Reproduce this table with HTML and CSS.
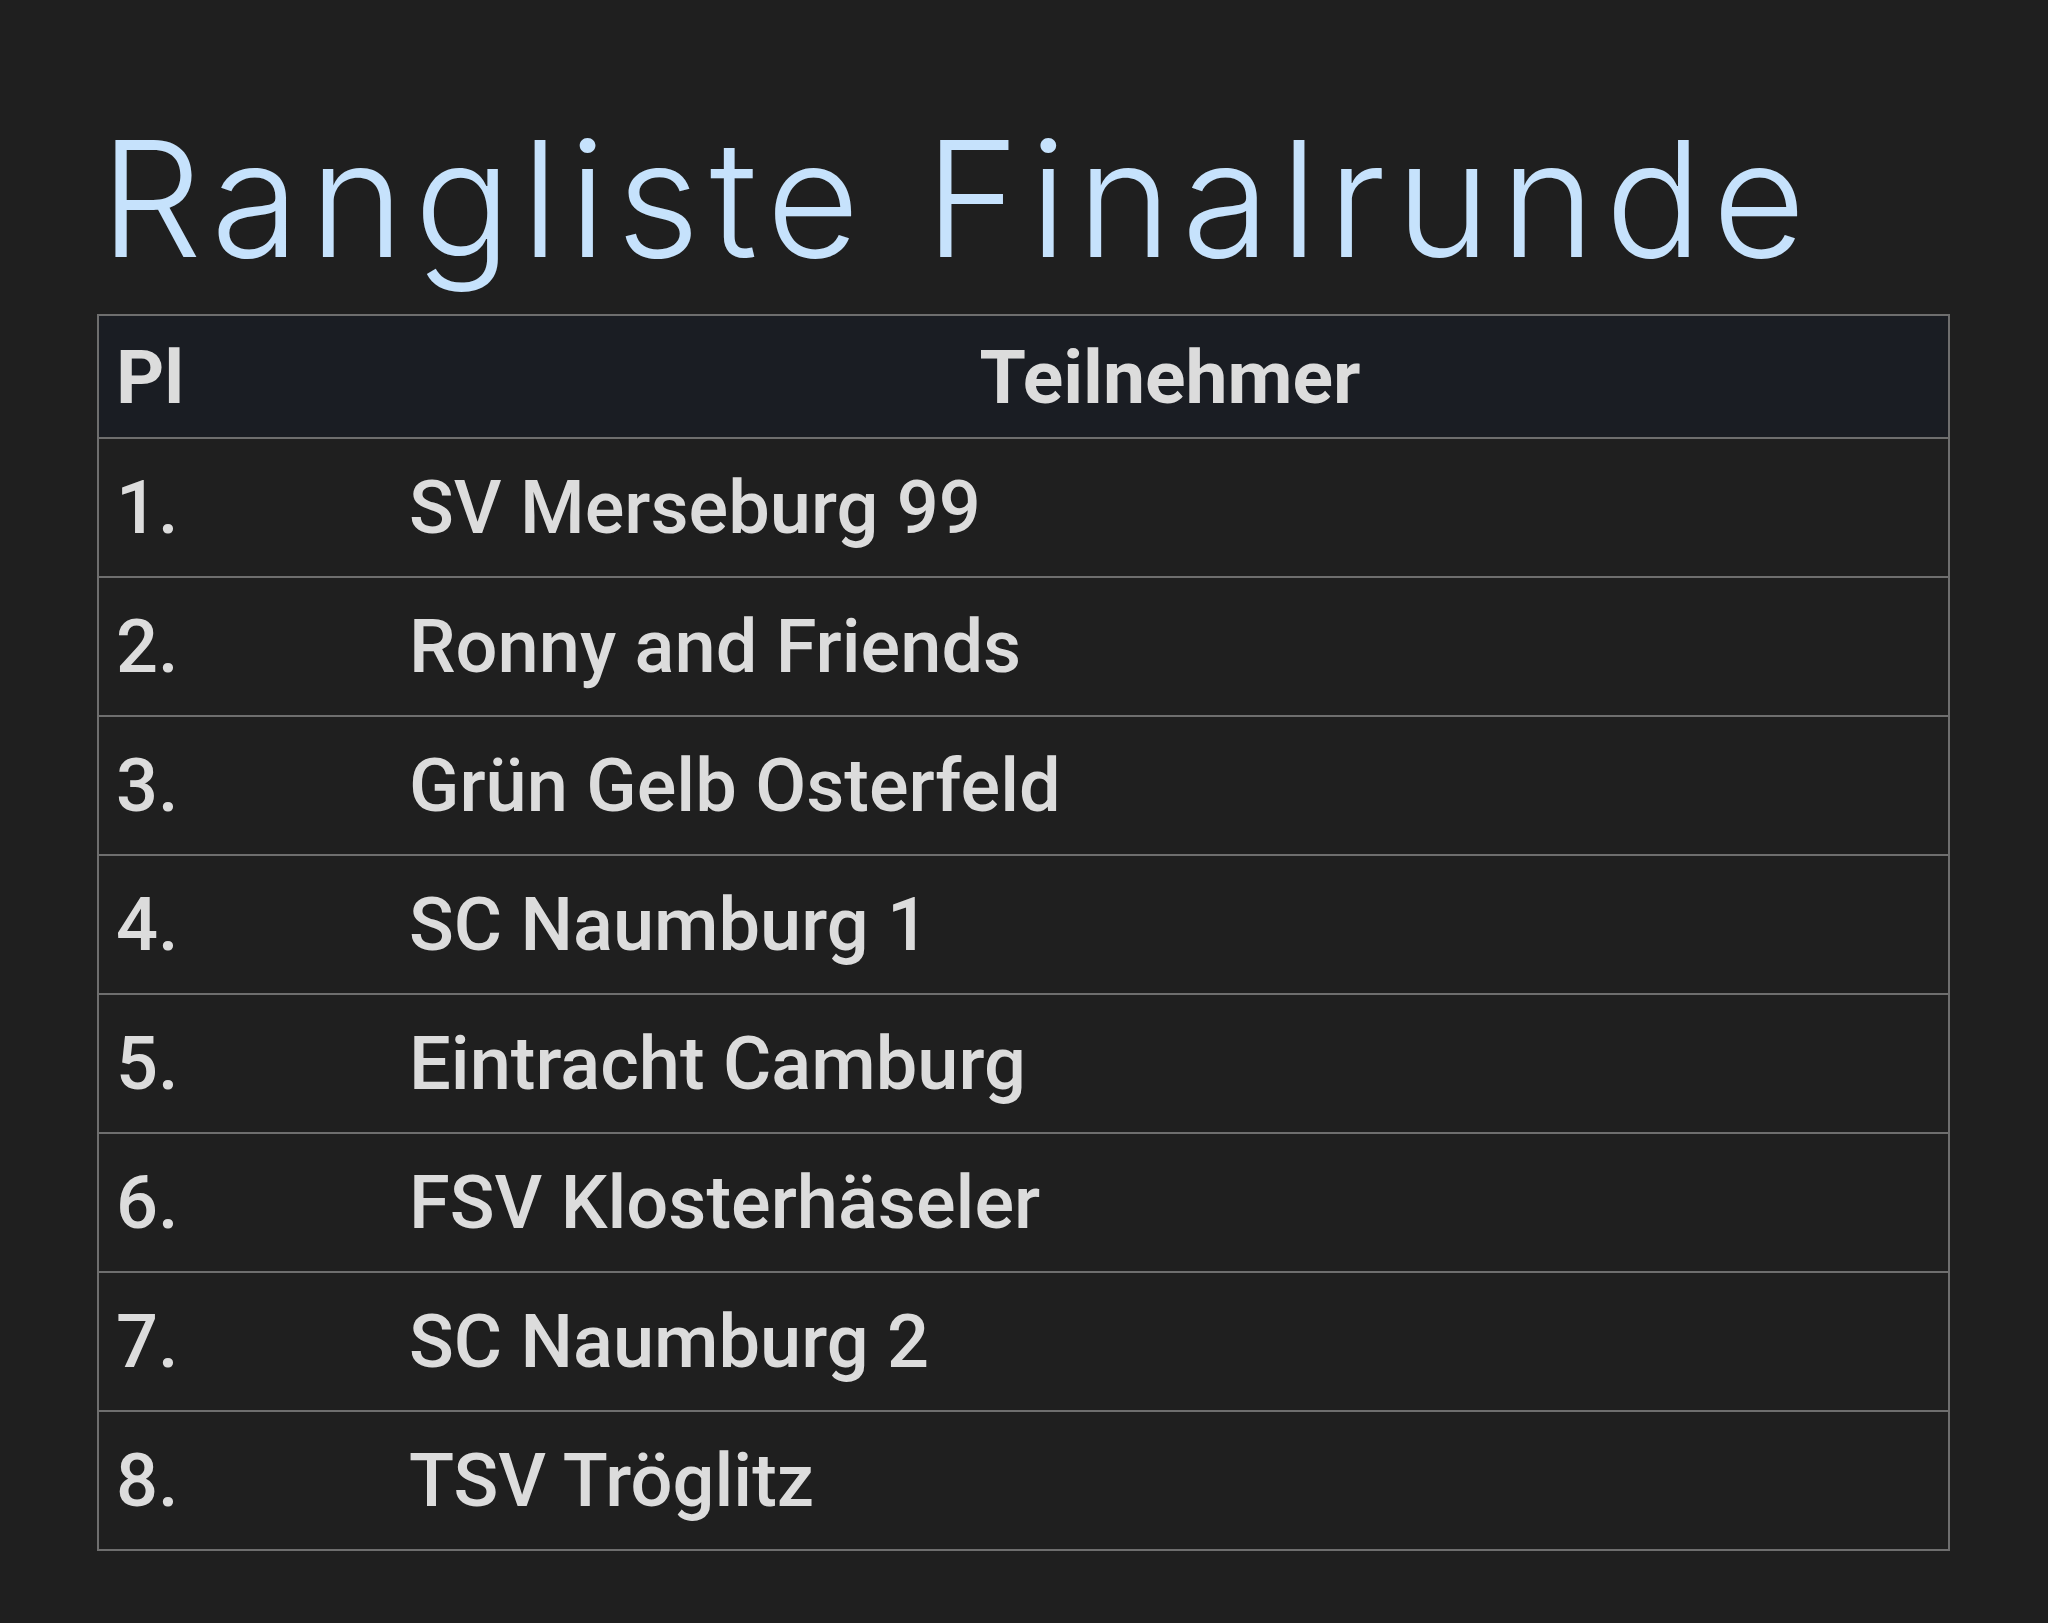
FILE: index.html
```html
<!DOCTYPE html>
<html lang="de">
<head>
<meta charset="utf-8">
<title>Rangliste Finalrunde</title>
<link rel="stylesheet" href="styles.css">
</head>
<body>
<main class="page">
  <h1 class="title">Rangliste Finalrunde</h1>
  <table class="ranking">
    <thead>
      <tr><th class="col-pl">Pl</th><th class="col-team">Teilnehmer</th></tr>
    </thead>
    <tbody>
      <tr><td class="col-pl">1.</td><td class="col-team">SV Merseburg 99</td></tr>
      <tr><td class="col-pl">2.</td><td class="col-team">Ronny and Friends</td></tr>
      <tr><td class="col-pl">3.</td><td class="col-team">Grün Gelb Osterfeld</td></tr>
      <tr><td class="col-pl">4.</td><td class="col-team">SC Naumburg 1</td></tr>
      <tr><td class="col-pl">5.</td><td class="col-team">Eintracht Camburg</td></tr>
      <tr><td class="col-pl">6.</td><td class="col-team">FSV Klosterhäseler</td></tr>
      <tr><td class="col-pl">7.</td><td class="col-team">SC Naumburg 2</td></tr>
      <tr><td class="col-pl">8.</td><td class="col-team">TSV Tröglitz</td></tr>
    </tbody>
  </table>
</main>
</body>
</html>
```

FILE: styles.css
```css
html, body {
  margin: 0;
  padding: 0;
  background: #1f1f1f;
}

.page {
  padding: 104px 98px 0 97px;
}

.title {
  margin: 0 0 20px 3px;
  font-family: "Inter", "Noto Sans", sans-serif;
  font-weight: 300;
  font-size: 161px;
  line-height: 190px;
  color: #c6e2fc;
  letter-spacing: 10px;
  white-space: nowrap;
}

.ranking {
  width: 100%;
  border-collapse: collapse;
  border: 2px solid #6e6e6e;
  font-family: "Roboto", "Liberation Sans", sans-serif;
  color: #dcdcdc;
}

.ranking th,
.ranking td {
  border-top: 2px solid #6e6e6e;
  border-bottom: 2px solid #6e6e6e;
  padding: 0 17px;
}

.ranking thead tr {
  background: #1a1d23;
  height: 123px;
}

.ranking th {
  font-weight: 700;
  font-size: 75px;
}

.ranking th.col-pl {
  text-align: left;
}

.ranking th.col-team {
  text-align: center;
}

.ranking tbody tr {
  height: 139px;
}

.ranking td {
  font-weight: 500;
  font-size: 74px;
  text-align: left;
}

.col-pl {
  width: 259px;
}
```
